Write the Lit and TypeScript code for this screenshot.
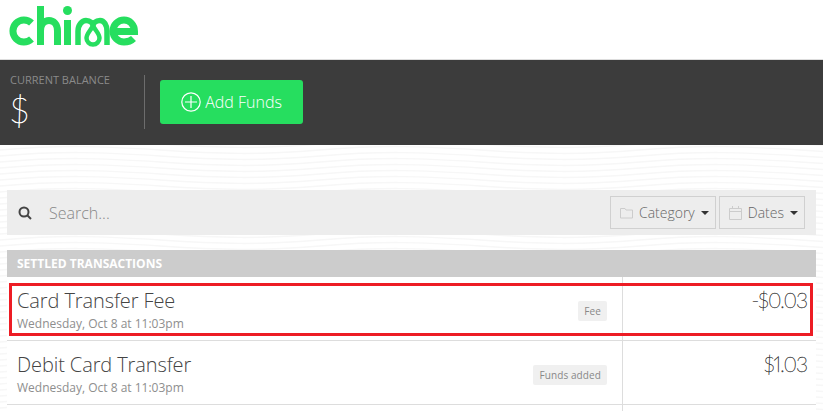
import { LitElement, css, html, svg, unsafeCSS } from "lit";
import { customElement } from "lit/decorators.js";

// faint wavy page texture
const waves = encodeURIComponent(
  `<svg xmlns="http://www.w3.org/2000/svg" width="320" height="96"><g fill="none" stroke="#f7f7f7" stroke-width="1.5">` +
    Array.from({ length: 17 })
      .map((_, i) => {
        const y = i * 6;
        return `<path d="M0 ${y}C60 ${y - 5} 100 ${y - 4} 160 ${y}S260 ${y + 5} 320 ${y}"/>`;
      })
      .join("") +
    `</g></svg>`
);

const logo = svg`
  <g fill="none" stroke="#26de5f" stroke-width="7">
    <path d="M31.500 23a11 11 0 1 0 0 16" />
    <path d="M40.500 6v39M40.500 31c0-14 17-14 17 0v14" />
    <path d="M67.500 20v25" />
    <g stroke-width="5.500">
      <path d="M78 45V31c0-6 4-10.500 8-10.500 4.500 0 7 3 7 5.500 0-2.500 2.500-5.500 7-5.500 4 0 7 4.500 7 10.500v14" />
    </g>
    <path d="M93 26c-3 5-6.500 8-6.500 12a6.500 6.500 0 0 0 13 0c0-4-3.500-7-6.500-12z" stroke-width="4.500" />
    <path d="M114 31.500h20.500c0-7-5-11.500-10.500-11.500a11 11 0 0 0 0 22c4 0 7-1 9.500-3.500" />
  </g>
  <circle cx="67.500" cy="10.500" r="4.500" fill="#26de5f" />
`;

@customElement("app-root")
export class AppRoot extends LitElement {
  static styles = css`
    :host {
      display: block;
      height: 411px;
      overflow: hidden;
      background: #fff url("data:image/svg+xml,${unsafeCSS(waves)}");
      font-family: "Open Sans", sans-serif;
    }
    .top {
      height: 59px;
      background: #fff;
      border-bottom: 1px solid #ddd;
    }
    .logo {
      display: block;
      width: 150px;
      height: 55px;
    }
    .bar {
      height: 85px;
      background: #3c3c3c;
      display: flex;
      align-items: center;
    }
    .balance {
      width: 145px;
      padding-left: 10px;
      box-sizing: border-box;
      height: 54px;
      border-right: 1px solid #6d6d6d;
      color: #fff;
      margin-top: -1px;
    }
    .balance small {
      display: block;
      font-size: 11px;
      line-height: 12px;
      margin-top: -1px;
      color: #8a8a8a;
    }
    .balance b {
      display: block;
      font-family: Lato, sans-serif;
      font-weight: 100;
      -webkit-text-stroke: 0.6px #fff;
      font-size: 36px;
      line-height: 40px;
      margin: 3px 0 0 -1px;
    }
    .add {
      margin-left: 15px;
      width: 143px;
      height: 44px;
      margin-top: -2px;
      background: #26de5f;
      border-radius: 3px;
      color: #fff;
      font-size: 16px;
      font-weight: 300;
      display: flex;
      align-items: center;
      justify-content: center;
      gap: 4px;
    }
    main {
      padding: 45px 7px 0;
    }
    .search {
      height: 45px;
      background: #ededed;
      display: flex;
      align-items: center;
      padding: 0 11px;
      gap: 3px;
    }
    .search input {
      flex: 1;
      min-width: 0;
      margin-left: 14px;
      padding: 0;
      border: 0;
      background: none;
      outline: none;
      font-family: inherit;
      font-weight: 300;
      font-size: 16px;
    }
    .search input::placeholder {
      color: #888;
      opacity: 1;
    }
    .filter {
      height: 33px;
      box-sizing: border-box;
      border: 1px solid #d0d0d0;
      display: flex;
      align-items: center;
      gap: 6px;
      padding: 0 6px 0 9px;
      font-size: 14px;
      font-weight: 300;
      color: #666;
    }
    .caret {
      width: 0;
      height: 0;
      border: 4px solid transparent;
      border-top: 4px solid #333;
      border-bottom: 0;
    }
    .heading {
      margin-top: 15px;
      height: 27px;
      background: #ccc;
      color: #fff;
      font-size: 12px;
      font-weight: 700;
      line-height: 27px;
      padding-left: 10px;
    }
    .list {
      position: relative;
      background: #fff;
    }
    .row {
      height: 64px;
      box-sizing: border-box;
      border-bottom: 1px solid #ddd;
      display: grid;
      grid-template-columns: 616px 1fr;
    }
    .info {
      border-right: 1px solid #ddd;
      padding: 10px 15px 0 10px;
      display: grid;
      grid-template-columns: 1fr auto;
    }
    .name {
      font-size: 20px;
      font-weight: 300;
      line-height: 27px;
      letter-spacing: -0.1px;
      color: #444;
    }
    .when {
      font-size: 12px;
      line-height: 16px;
      margin-top: 2px;
      color: #8e8e8e;
    }
    .tag {
      align-self: start;
      margin-top: 14px;
      background: #f0f0f0;
      border-radius: 2px;
      padding: 0 6px;
      height: 20px;
      font-size: 10px;
      line-height: 20px;
      letter-spacing: 0.1px;
      color: #888;
    }
    .amount {
      text-align: right;
      padding: 9px 9px 0 0;
      font-family: Lato, sans-serif;
      font-variant-numeric: proportional-nums;
      font-size: 21px;
      font-weight: 100;
      -webkit-text-stroke: 0.4px #333;
      letter-spacing: -1px;
      line-height: 27px;
      color: #333;
    }
    .mark {
      position: absolute;
      left: 2px;
      top: 6px;
      width: 798px;
      height: 47px;
      border: 3px solid #ed1c24;
      pointer-events: none;
    }
  `;

  private rows = [
    { name: "Card Transfer Fee", tag: "Fee", amount: "-$0.03" },
    { name: "Debit Card Transfer", tag: "Funds added", amount: "$1.03" },
  ];

  render() {
    return html`
      <div class="top">
        <svg class="logo" viewBox="0 0 150 55">${logo}</svg>
      </div>
      <div class="bar">
        <div class="balance">
          <small>CURRENT BALANCE</small>
          <b>$</b>
        </div>
        <div class="add">
          <svg width="20" height="20" viewBox="0 0 20 20" fill="none" stroke="#fff" stroke-width="1.2">
            <circle cx="10" cy="10" r="9.200" />
            <path d="M10 4v12M4 10h12" />
          </svg>
          Add Funds
        </div>
      </div>
      <main>
        <div class="search">
          <svg width="14" height="14" viewBox="0 0 14 14" fill="none" stroke="#444" stroke-width="2">
            <circle cx="6" cy="6" r="4.500" />
            <path d="M9.500 9.500L13 13" />
          </svg>
          <input placeholder="Search..." />
          <div class="filter">
            <svg width="13" height="12" viewBox="0 0 13 12" fill="none" stroke="#ccc">
              <path d="M.5 11V1.500h4.500l1 1.500h6.500v8z" />
            </svg>
            Category
            <span class="caret"></span>
          </div>
          <div class="filter">
            <svg width="13" height="14" viewBox="0 0 13 14" fill="none" stroke="#ccc">
              <path d="M.5 2.500h12v11H.5zM.5 5.500h12" />
              <path d="M3.500 0v3M9.500 0v3" />
            </svg>
            Dates
            <span class="caret"></span>
          </div>
        </div>
        <div class="heading">SETTLED TRANSACTIONS</div>
        <div class="list">
          ${this.rows.map(
            (r) => html`
              <div class="row">
                <div class="info">
                  <div>
                    <div class="name">${r.name}</div>
                    <div class="when">Wednesday, Oct 8 at 11:03pm</div>
                  </div>
                  <span class="tag">${r.tag}</span>
                </div>
                <div class="amount">${r.amount}</div>
              </div>
            `
          )}
          <div class="row"><div class="info"></div></div>
          <div class="mark"></div>
        </div>
      </main>
    `;
  }
}
